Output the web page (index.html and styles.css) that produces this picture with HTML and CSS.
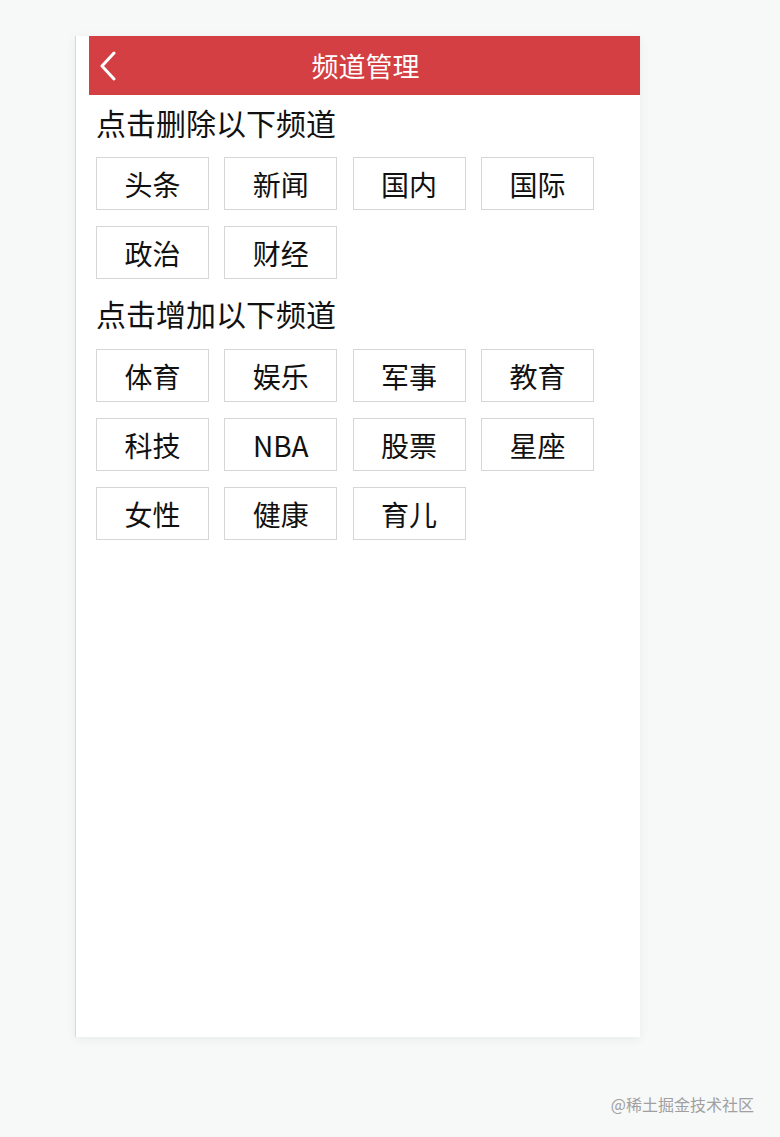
FILE: index.html
```html
<!DOCTYPE html>
<html lang="zh-CN">
<head>
<meta charset="utf-8">
<title>频道管理</title>
<link rel="stylesheet" href="styles.css">
</head>
<body>
<div class="page">
  <div class="phone">
    <div class="header">
      <span class="back">
        <svg width="20" height="30" viewBox="0 0 20 30"><polyline points="16,2 4,15 16,28" fill="none" stroke="#fff" stroke-width="3" stroke-linecap="round" stroke-linejoin="round"/></svg>
      </span>
      <span class="title">频道管理</span>
    </div>
    <div class="section">
      <div class="section-title">点击删除以下频道</div>
      <div class="tags">
        <div class="tag">头条</div>
        <div class="tag">新闻</div>
        <div class="tag">国内</div>
        <div class="tag">国际</div>
        <div class="tag">政治</div>
        <div class="tag">财经</div>
      </div>
    </div>
    <div class="section">
      <div class="section-title">点击增加以下频道</div>
      <div class="tags">
        <div class="tag">体育</div>
        <div class="tag">娱乐</div>
        <div class="tag">军事</div>
        <div class="tag">教育</div>
        <div class="tag">科技</div>
        <div class="tag">NBA</div>
        <div class="tag">股票</div>
        <div class="tag">星座</div>
        <div class="tag">女性</div>
        <div class="tag">健康</div>
        <div class="tag">育儿</div>
      </div>
    </div>
  </div>
  <div class="watermark">@稀土掘金技术社区</div>
</div>
</body>
</html>
```
FILE: styles.css
```css
html, body {
  margin: 0;
  padding: 0;
}
body {
  background: #f7f8f8;
  font-family: "Noto Sans CJK SC", "Noto Sans", sans-serif;
  color: #111;
}
.page {
  padding: 36px 0 0 75px;
  height: 1101px;
  position: relative;
}
.phone {
  width: 564px;
  height: 1001px;
  background: #fff;
  border-left: 1px solid #d8d8d8;
  box-shadow: 0 2px 10px rgba(0, 0, 0, 0.06);
}
.header {
  margin-left: 13px;
  height: 59px;
  background: #d33f42;
  display: flex;
  align-items: center;
  justify-content: center;
  position: relative;
}
.back {
  position: absolute;
  left: 9px;
  top: 15px;
  display: flex;
}
.title {
  color: #fff;
  font-size: 27px;
  line-height: 1;
  margin-left: 2px;
}
.section {
  padding-left: 20px;
}
.section-title {
  font-size: 30px;
  line-height: 1;
  padding-top: 12px;
  height: 50px;
}
.tags {
  display: flex;
  flex-wrap: wrap;
  gap: 16px 15.3px;
  width: 530px;
}
.tag {
  box-sizing: border-box;
  width: 113px;
  height: 53px;
  border: 1px solid #d6d6d6;
  display: flex;
  align-items: center;
  justify-content: center;
  font-size: 28px;
  line-height: 1;
}
.section + .section .section-title {
  padding-top: 19px;
  height: 51px;
}
.watermark {
  position: absolute;
  right: 26px;
  top: 1092px;
  font-size: 16px;
  color: #a0a0a0;
}
```
